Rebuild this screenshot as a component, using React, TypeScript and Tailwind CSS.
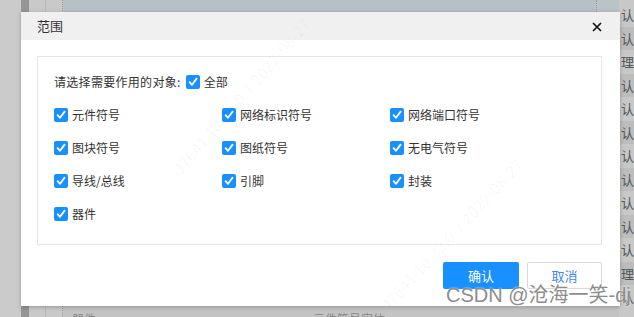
import React from "react";

const FONT = '"Noto Sans CJK SC", "Microsoft YaHei", "Liberation Sans", sans-serif';

function Check({ label }: { label?: string }) {
  return (
    <div className="flex items-center h-4">
      <span className="w-[14px] h-[14px] rounded-[2px] bg-[#1890ff] flex items-center justify-center shrink-0">
        <svg width="10" height="10" viewBox="0 0 10 10">
          <path d="M1.6 5.2 L4 7.8 L8.6 1.6" fill="none" stroke="#fff" strokeWidth="1.8" strokeLinecap="round" strokeLinejoin="round" />
        </svg>
      </span>
      {label && <span className="ml-[4px] text-[12px] text-[#333] leading-4 whitespace-nowrap">{label}</span>}
    </div>
  );
}

const items = [
  "元件符号", "网络标识符号", "网络端口符号",
  "图块符号", "图纸符号", "无电气符号",
  "导线/总线", "引脚", "封装",
  "器件",
];

const rightRows = ["认", "认", "理图", "认", "认", "认", "认", "认", "认", "认", "认", "理图", "认"];

export default function App() {
  return (
    <div className="relative w-[634px] h-[317px] overflow-hidden bg-[#c4c4c4]" style={{ fontFamily: FONT }}>
      {/* background app */}
      <div className="flex h-full">
        <div className="w-[21px] bg-[#cbcbcb]" />
        <div className="w-[8px] bg-[#969696]" />
        <div className="w-[17px] bg-[#c9c9c9] border-r border-[#b9b9b9]" />
        <div className="w-[17px] bg-[#c9c9c9] border-r border-dotted border-[#9a9a9a]" />
        <div className="flex-1 flex flex-col">
          <div className="h-[12px] bg-[#b5c1c5] flex">
            <div className="w-[533px]" />
            <div className="flex-1 border-l border-dotted border-[#9a9a9a] bg-[#bac4c7]" />
          </div>
          <div className="flex-1 bg-[#c3c3c3] flex items-end">
            <div className="flex h-[11px] overflow-hidden w-full text-[12px] text-[#8a8a8a] leading-4 pt-[5px]">
              <span className="ml-[9px] w-[241px]">器件</span>
              <span>元件符号实体</span>
            </div>
          </div>
        </div>
        <div className="w-[15px] flex flex-col pt-[3px] bg-[#c8c8c8]">
          {rightRows.map((t, i) => (
            <div
              key={i}
              className={`h-[23.5px] shrink-0 flex items-center overflow-hidden whitespace-nowrap text-[13px] text-[#555] pl-[2px] ${i % 2 ? "bg-[#bdbdbd]" : "bg-[#c8c8c8]"}`}
            >
              {t}
            </div>
          ))}
        </div>
      </div>

      {/* dialog */}
      <div className="absolute left-[21px] top-[12px] w-[599px] h-[294px] bg-white shadow-[0_1px_4px_rgba(0,0,0,0.25)] flex flex-col overflow-hidden">
        <div className="h-[28px] bg-[#f0f0f0] flex items-center justify-between pl-4 pr-[18px] shrink-0">
          <span className="text-[13px] text-[#333]">范围</span>
          <svg width="10" height="10" viewBox="0 0 10 10" className="mt-[1px]">
            <path d="M1 1 L9 9 M9 1 L1 9" stroke="#111" strokeWidth="1.7" />
          </svg>
        </div>
        <div className="flex-1 flex flex-col pl-4 pr-[18px] pt-4 pb-[17px]">
          <div className="h-[189px] border border-[#e6e6e6] pl-4 pt-[17px]">
            <div className="flex items-center h-4 text-[12px] text-[#333]">
              <span className="leading-4 tracking-[0.3px]">请选择需要作用的对象:</span>
              <span className="ml-[5px]"><Check label="全部" /></span>
            </div>
            <div className="grid grid-cols-[168px_168px_168px] gap-y-[17px] mt-[17px]">
              {items.map((t) => (
                <Check key={t} label={t} />
              ))}
            </div>
          </div>
          <div className="flex-1" />
          <div className="flex justify-end gap-2">
            <button className="w-[76px] h-[27px] bg-[#1890ff] text-white text-[13px] rounded-[2px]">确认</button>
            <button className="w-[75px] h-[27px] bg-white border border-[#d9d9d9] text-[#3f86f5] text-[13px] rounded-[2px]">取消</button>
          </div>
        </div>
        {/* faint watermark */}
        <div className="absolute left-[120px] top-[72px] -rotate-[49deg] text-[16px] text-black/[0.035] whitespace-nowrap pointer-events-none">
          J7641 10.22.0.7 2022-08-27
        </div>
        <div className="absolute left-[330px] top-[210px] -rotate-[47deg] text-[16px] text-black/[0.035] whitespace-nowrap pointer-events-none">
          J7641 10.22.0.7 2022-08-27
        </div>
      </div>

      {/* CSDN watermark */}
      <div
        className="absolute left-[446px] top-[282px] text-[20px] leading-[26px] text-[#8c8c8c] whitespace-nowrap pointer-events-none"
        style={{ fontFamily: '"Liberation Sans", "Noto Sans CJK SC", sans-serif', textShadow: "0 0 2px #fff" }}
      >
        CSDN @沧海一笑-dj
      </div>
    </div>
  );
}
